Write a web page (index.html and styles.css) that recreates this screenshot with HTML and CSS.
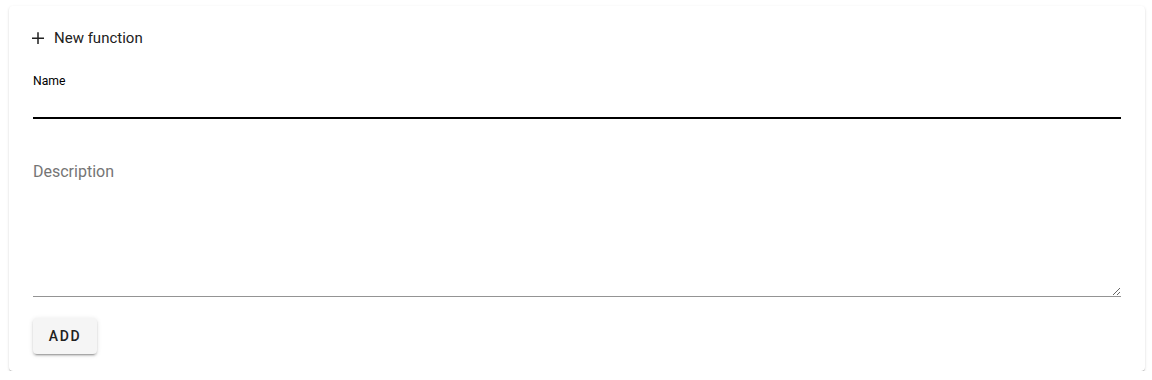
FILE: index.html
```html
<!DOCTYPE html>
<html>
<head>
<meta charset="utf-8">
<link rel="stylesheet" href="styles.css">
</head>
<body>
<div class="page">
  <div class="card">
    <div class="title">
      <svg class="plus" viewBox="0 0 12 12" width="12" height="12"><path d="M0 6.25H12M6 0.25V12.25" stroke="#212121" stroke-width="1.5" fill="none"/></svg>
      <span>New function</span>
    </div>
    <label class="label" for="name">Name</label>
    <input id="name" class="input" type="text">
    <textarea class="textarea" placeholder="Description"></textarea>
    <div class="actions">
      <button class="btn">ADD</button>
    </div>
  </div>
</div>
</body>
</html>
```
FILE: styles.css
```css
html, body { margin: 0; padding: 0; background: #fff; }
body { font-family: Roboto, "Noto Sans", sans-serif; color: #212121; }
.page { padding: 6px 7px 0 9px; }
.card {
  background: #fff;
  border-radius: 4px;
  box-shadow: 0 2px 1px -1px rgba(0,0,0,0.2), 0 1px 1px 0 rgba(0,0,0,0.14), 0 1px 3px 0 rgba(0,0,0,0.12);
  padding: 20px 24px 17px;
  display: flex;
  flex-direction: column;
}
.title {
  display: flex;
  align-items: center;
  height: 24px;
  font-size: 15px;
  line-height: 24px;
  color: #212121;
}
.plus { width: 12px; height: 12px; margin-left: -1px; margin-right: 10px; }
.label {
  margin-top: 23px;
  font-size: 12.2px;
  line-height: 16px;
  color: #000;
}
.input {
  height: 28px;
  box-sizing: content-box;
  border: none;
  border-bottom: 2px solid #000;
  padding: 0;
  margin: 0;
  outline: none;
  font: 16px Roboto, sans-serif;
  background: transparent;
}
.textarea {
  margin: 40px 0 0;
  height: 136px;
  box-sizing: content-box;
  padding: 1px 0 0;
  border: none;
  border-bottom: 1px solid #949494;
  outline: none;
  font: 16px/24px Roboto, sans-serif;
  color: #212121;
  background: transparent;
  resize: vertical;
}
.textarea::placeholder { color: #757575; }
.actions { margin-top: 21px; display: flex; }
.btn {
  height: 36px;
  width: 64px;
  border: none;
  border-radius: 4px;
  background: #f5f5f5;
  box-shadow: 0 3px 1px -2px rgba(0,0,0,0.2), 0 2px 2px 0 rgba(0,0,0,0.14), 0 1px 5px 0 rgba(0,0,0,0.12);
  font: 500 14px Roboto, sans-serif;
  letter-spacing: 1.6px;
  color: #212121;
  padding: 0;
}
```
